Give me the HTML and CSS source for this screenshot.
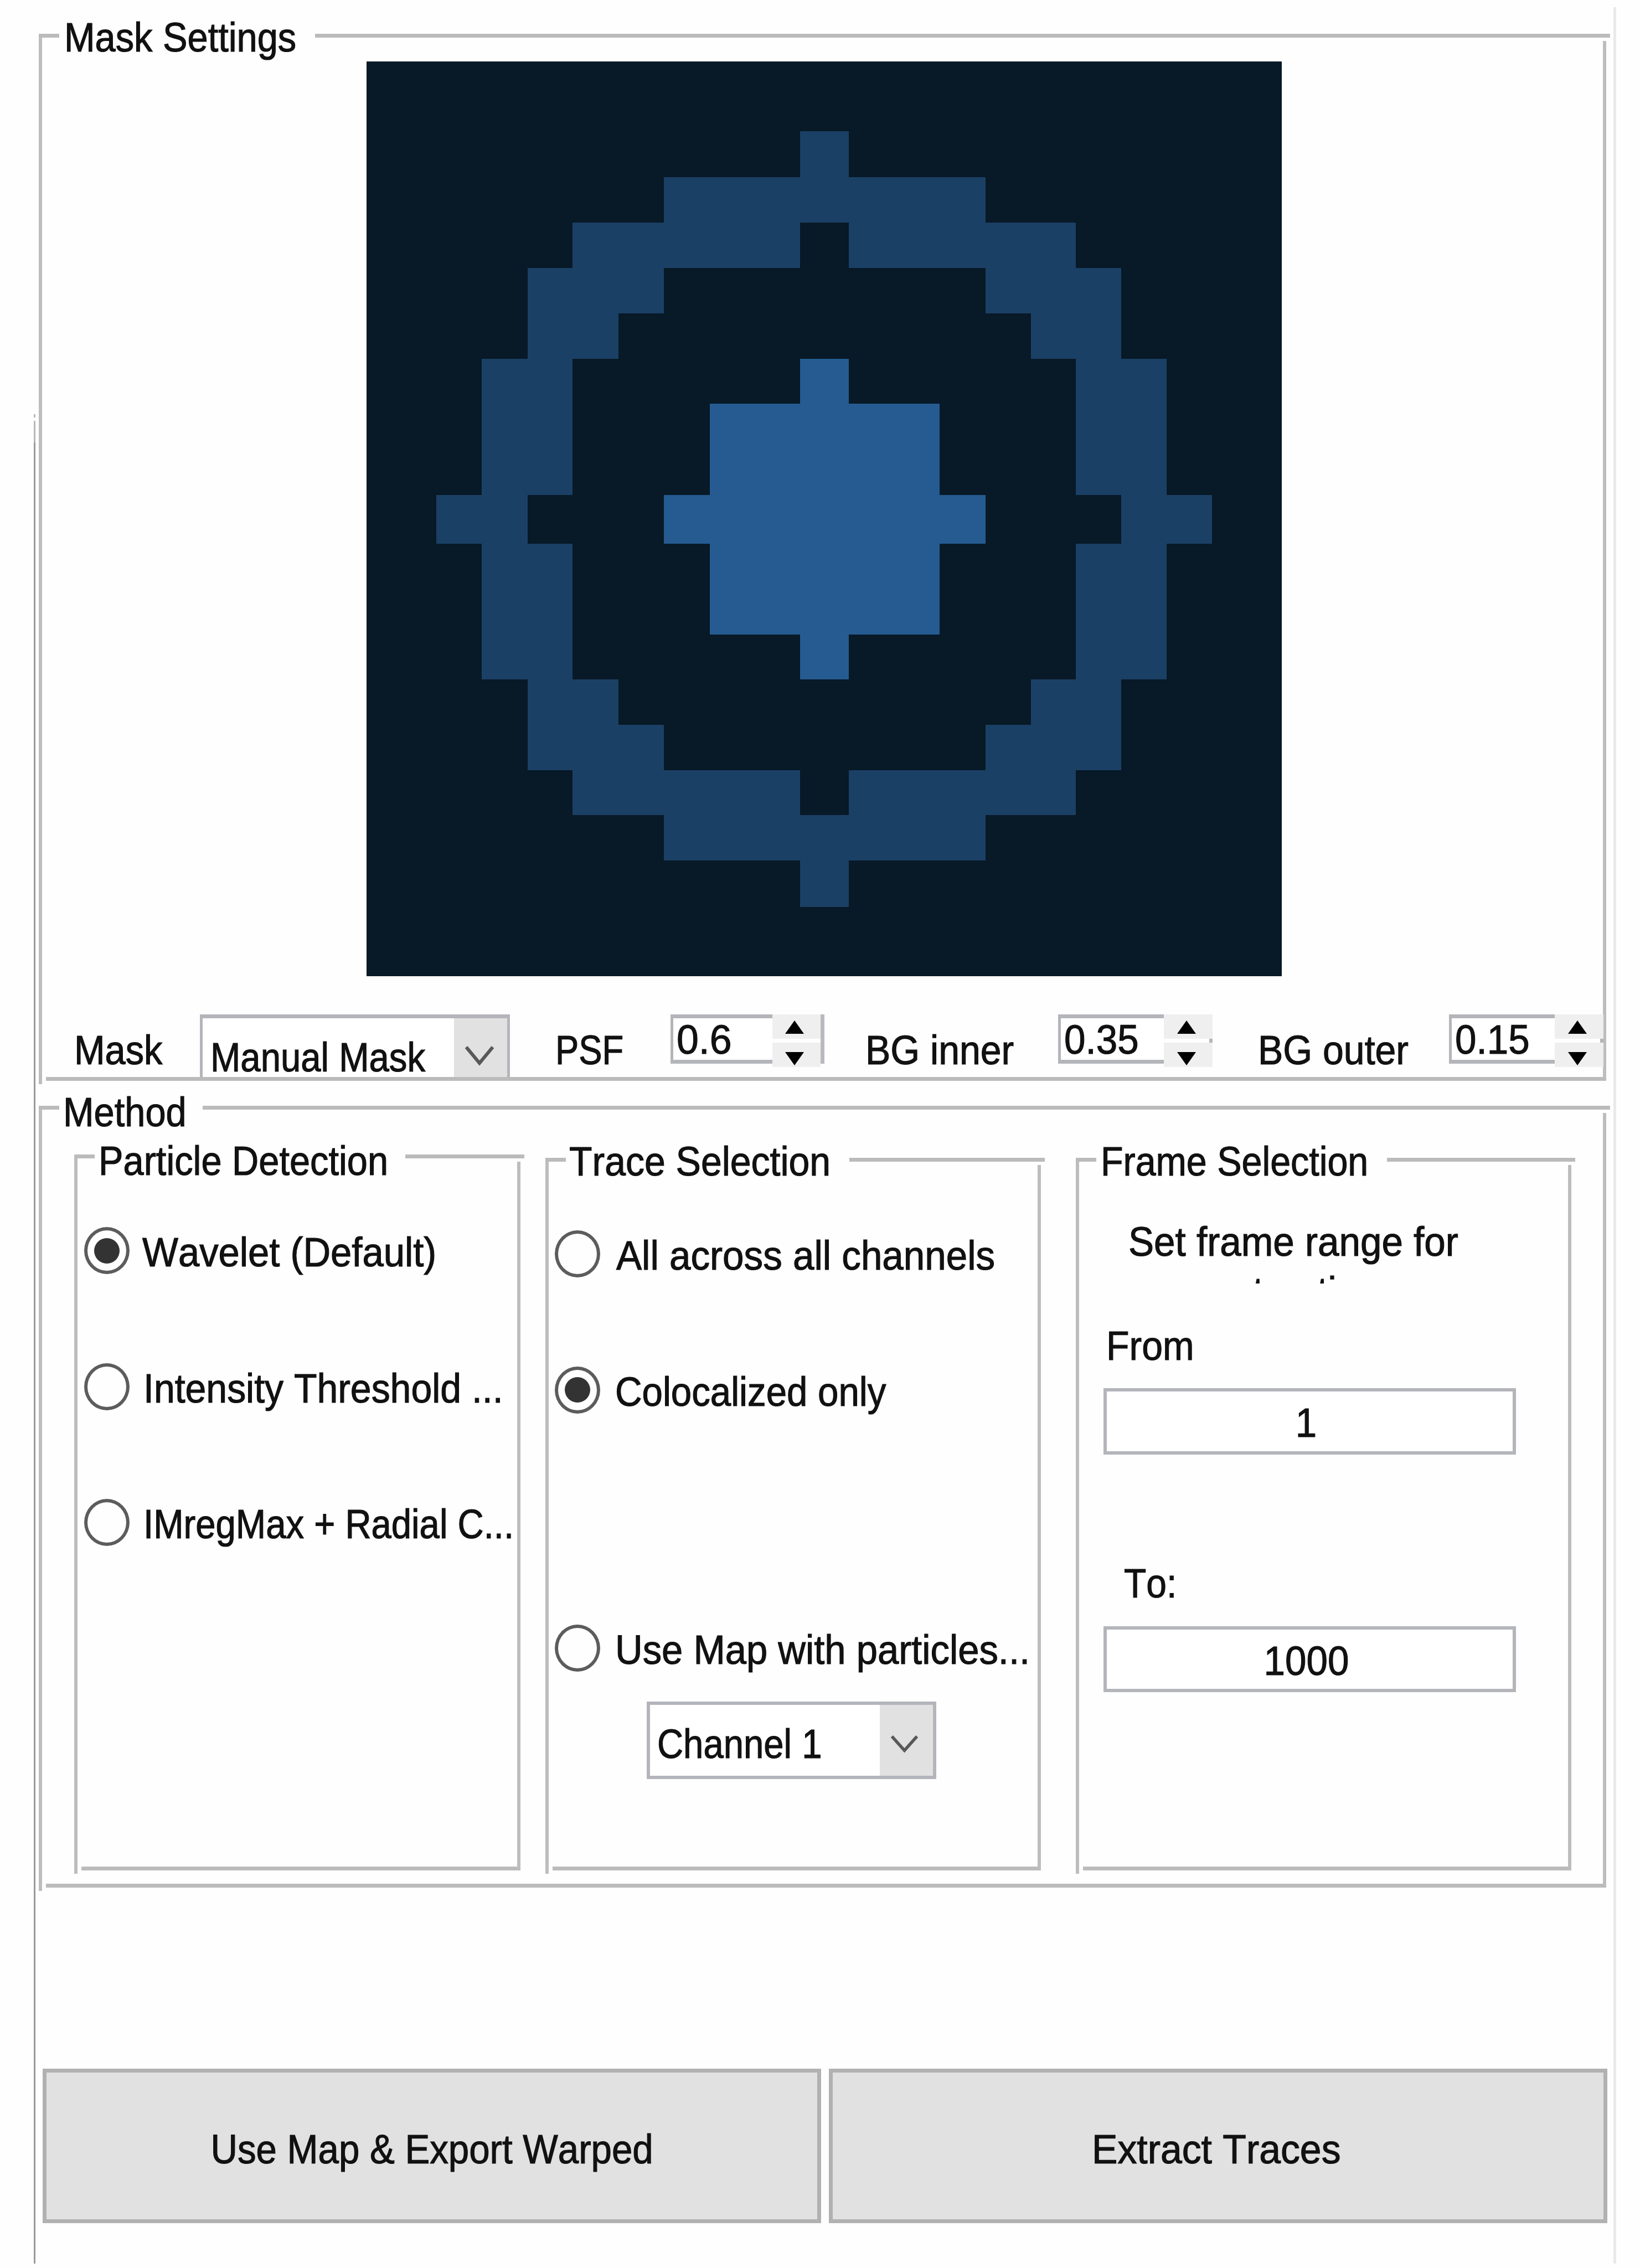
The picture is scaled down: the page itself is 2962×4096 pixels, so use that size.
FILE: index.html
```html
<!DOCTYPE html>
<html lang="en">
<head>
<meta charset="utf-8">
<title>Mask Settings</title>
<link rel="stylesheet" href="styles.css">
</head>
<body>
<main class="window">
  <section class="group mask-group">
    <header class="group-head"><i class="stub"></i><h2 class="title title-mask"><span class="t w89">Mask Settings</span></h2><i class="rule"></i></header>
    <svg class="mask-image" viewBox="24 31 1488 1489" preserveAspectRatio="none" shape-rendering="crispEdges">
      <rect x="24" y="31" width="1488" height="1489" fill="#081927"/>
      <path fill="#1b4065" fill-rule="evenodd" d="M729,145 808,145 808,219 1030,219 1030,293 1177,293 1177,367 1251,367 1251,515 1325,515 1325,737 1399,737 1399,816 1325,816 1325,1037 1251,1037 1251,1185 1177,1185 1177,1258 1030,1258 1030,1332 808,1332 808,1407 729,1407 729,1332 507,1332 507,1258 359,1258 359,1185 286,1185 286,1037 211,1037 211,816 137,816 137,737 211,737 211,515 286,515 286,367 359,367 359,293 507,293 507,219 729,219Z M729,293 808,293 808,367 1030,367 1030,441 1104,441 1104,515 1177,515 1177,737 1251,737 1251,816 1177,816 1177,1037 1104,1037 1104,1111 1030,1111 1030,1185 808,1185 808,1258 729,1258 729,1185 507,1185 507,1111 434,1111 434,1037 359,1037 359,816 286,816 286,737 359,737 359,515 434,515 434,441 507,441 507,367 729,367Z"/>
      <path fill="#255b91" d="M729,515 808,515 808,588 956,588 956,737 1030,737 1030,816 956,816 956,964 808,964 808,1037 729,1037 729,964 582,964 582,816 507,816 507,737 582,737 582,588 729,588Z"/>
    </svg>
    <div class="controls">
      <span class="label"><span class="t w89">Mask</span></span>
      <div class="select select-mask"><span class="select-text"><span class="t w87">Manual Mask</span></span><span class="select-arrow"><svg viewBox="0 0 54 36" class="chevron-tall"><path d="M3 2 L27 31 L51 2" fill="none" stroke="#595959" stroke-width="6"/></svg></span></div>
      <span class="label"><span class="t w84">PSF</span></span>
      <div class="spinner"><span class="value"><span class="t w96">0.6</span></span><span class="steps"><b class="step up"><svg viewBox="0 0 34 24"><path d="M17 0 L34 24 H0Z"/></svg></b><b class="step down"><svg viewBox="0 0 34 24"><path d="M17 24 L34 0 H0Z"/></svg></b></span><i class="edge"></i></div>
      <span class="label"><span class="t w905">BG inner</span></span>
      <div class="spinner wide"><span class="value"><span class="t w92">0.35</span></span><span class="steps"><b class="step up"><svg viewBox="0 0 34 24"><path d="M17 0 L34 24 H0Z"/></svg></b><i class="tick"></i><b class="step down"><svg viewBox="0 0 34 24"><path d="M17 24 L34 0 H0Z"/></svg></b></span></div>
      <span class="label"><span class="t w905">BG outer</span></span>
      <div class="spinner wide"><span class="value"><span class="t w92">0.15</span></span><span class="steps"><b class="step up"><svg viewBox="0 0 34 24"><path d="M17 0 L34 24 H0Z"/></svg></b><i class="tick"></i><b class="step down"><svg viewBox="0 0 34 24"><path d="M17 24 L34 0 H0Z"/></svg></b></span></div>
    </div>
  </section>

  <section class="group method-group">
    <header class="group-head"><i class="stub"></i><h2 class="title title-method"><span class="t w89">Method</span></h2><i class="rule"></i></header>
    <div class="panels">
      <section class="group particle">
        <header class="group-head"><i class="stub"></i><h3 class="title title-particle"><span class="t w89">Particle Detection</span></h3><i class="rule"></i></header>
        <div class="radios">
          <div class="radio on"><i></i><span class="wavelet"><span class="t w915">Wavelet (Default)</span></span></div>
          <div class="radio"><i></i><span><span class="t w905">Intensity Threshold ...</span></span></div>
          <div class="radio"><i></i><span><span class="t w87">IMregMax + Radial C...</span></span></div>
        </div>
      </section>
      <section class="group trace">
        <header class="group-head"><i class="stub"></i><h3 class="title title-trace"><span class="t w905">Trace Selection</span></h3><i class="rule"></i></header>
        <div class="radios">
          <div class="radio"><i></i><span class="all"><span class="t w92">All across all channels</span></span></div>
          <div class="radio on"><i></i><span><span class="t w895">Colocalized only</span></span></div>
          <div class="radio map"><i></i><span><span class="t w915">Use Map with particles...</span></span></div>
        </div>
        <div class="select select-channel"><span class="select-text"><span class="t w87">Channel 1</span></span><span class="select-arrow"><svg viewBox="0 0 54 36" class="chevron"><path d="M3 3 L27 30 L51 3" fill="none" stroke="#595959" stroke-width="6"/></svg></span></div>
      </section>
      <section class="group frame">
        <header class="group-head"><i class="stub"></i><h3 class="title title-frame"><span class="t w885">Frame Selection</span></h3><i class="rule"></i></header>
        <p class="hint"><span class="t w92">Set frame range for</span><span class="t w93 second">extraction</span></p>
        <div class="field-label from"><span class="t w905">From</span></div>
        <div class="input"><span class="t w92">1</span></div>
        <div class="field-label to"><span class="t w88">To:</span></div>
        <div class="input input-to"><span class="t w92">1000</span></div>
      </section>
    </div>
  </section>

  <footer class="actions">
    <button class="action"><span class="t w895">Use Map &amp; Export Warped</span></button>
    <button class="action extract"><span class="t w93">Extract Traces</span></button>
  </footer>
</main>
</body>
</html>
```
FILE: styles.css
```css
* { box-sizing: border-box; }
body {
  margin: 0;
  background: #fefefe;
  color: #111;
  font: 75px/80px "Liberation Sans", Arial, sans-serif;
  font-kerning: none;
  -webkit-text-stroke: 1.2px #111;
}
.window {
  width: 2858px;
  height: 4096px;
  margin-left: 61px;
  padding: 61px 11px 0 9px;
  overflow: hidden;
  background:
    linear-gradient(#b8b8b8, #b8b8b8) 0 748px / 3px 6px no-repeat,
    linear-gradient(#b8b8b8, #b8b8b8) 0 760px / 3px 39px no-repeat,
    linear-gradient(#97999c, #97999c) 0 799px / 3px 3289px no-repeat,
    linear-gradient(#e9e9e9, #e9e9e9) 100% 13px / 5px 4075px no-repeat;
}

/* Condensed UI lettering */
.t { display: inline-block; white-space: nowrap; transform-origin: 0 50%; }
.w84 { transform: scaleX(.845); }
.w87 { transform: scaleX(.87); }
.w88 { transform: scaleX(.88); }
.w885 { transform: scaleX(.885); }
.w89 { transform: scaleX(.89); }
.w895 { transform: scaleX(.896); }
.w905 { transform: scaleX(.906); }
.w915 { transform: scaleX(.917); }
.w92 { transform: scaleX(.922); }
.w93 { transform: scaleX(.93); }
.w96 { transform: scaleX(.955); }

/* Titled group with open-cornered frame lines */
.group {
  background:
    linear-gradient(#bdbdbd, #bdbdbd) 0 0 / 6px 100% no-repeat,
    linear-gradient(#bdbdbd, #bdbdbd) calc(100% - 7px) 13px / 6px calc(100% - 22px) no-repeat,
    linear-gradient(#bbb, #bbb) 13px calc(100% - 6px) / calc(100% - 20px) 7px no-repeat;
}
.group-head { display: flex; align-items: center; height: 7px; }
.stub { width: 37px; height: 7px; background: #bbb; }
.rule { flex: 1; height: 7px; background: #bbb; }
.title { margin: 0; flex: none; font: inherit; padding: 16px 0 0 7px; }
.title-mask { width: 462px; padding: 4px 0 0 9px; }
.title-method { width: 259px; padding-left: 7px; }
.title-particle { width: 561px; }
.title-trace { width: 512px; padding: 5px 0 0 6px; }
.title-frame { width: 525px; padding: 5px 0 0 8px; }

.mask-group { height: 1897px; }
.mask-image { display: block; width: 1653px; height: 1652px; margin: 43px 0 0 592px; }
.controls {
  display: grid;
  grid-template-columns: 231.5px 637.5px 212px 348.5px 351.5px 357px 349px 279px;
  align-items: start;
  margin-top: 69px;
  padding-left: 59.5px;
}
.label { padding: 24px 0 0 4px; }

.select { display: flex; border: 6px solid #b4b5bb; background: #fff; }
.select-text { flex: 1; min-width: 0; padding-left: 14px; }
.select-arrow { flex: none; display: flex; background: #e1e1e1; }
.select-mask { width: 560px; height: 113px; border-width: 7px 5px 0; }
.select-mask .select-text { padding-top: 30px; }
.select-mask .select-arrow { width: 96px; }
.chevron-tall { width: 54px; height: 36px; margin: 50px 0 0 19px; }

.spinner { display: flex; width: 279px; height: 95px; }
.value { flex: none; width: 184px; height: 89px; padding-left: 6px; line-height: 76px; border: solid #b4b5bb; border-width: 7px 0 7px 5px; background: #fff; }
.steps { display: flex; flex-direction: column; justify-content: space-between; width: 87px; height: 95px; }
.wide .value { width: 191px; }
.wide .steps { width: 88px; }
.step { display: flex; justify-content: center; height: 44px; padding-right: 6px; background: #efefef; }
.step svg { width: 34px; height: 24px; fill: #000; }
.up { padding-top: 11px; }
.down { padding-top: 17px; }
.tick { align-self: flex-end; width: 6px; height: 7px; background: #b4b5bb; }
.edge { width: 7px; height: 89px; background: #b9bac0; }

.method-group { height: 1418.5px; margin-top: 38.5px; }
.panels { display: flex; align-items: flex-end; height: 1380.5px; padding-left: 64px; }
.particle { width: 813px; height: 1299.5px; }
.trace { width: 902px; height: 1293.5px; margin-left: 37.7px; }
.frame { width: 902px; height: 1293.5px; margin-left: 56.3px; }

.radios { display: flex; flex-direction: column; gap: 159.5px; padding: 124px 0 0 17.5px; }
.radio { display: flex; align-items: center; gap: 20px; height: 86px; }
.radio i { flex: none; display: grid; place-items: center; width: 82px; height: 85px; border: 6px solid #5c5c5c; border-radius: 50%; }
.radio.on i::after { content: ""; width: 46px; height: 46px; border-radius: 50%; background: #333; }
.radio > span { padding: 5px 0 0 5px; }
.radio > .wavelet { padding-left: 3px; }
.radio > .all { padding-left: 8px; }
.trace .radio > span { padding-left: 7px; }
.trace .radio > .all { padding-left: 9px; }
.radio.map { margin-top: 221px; }

.select-channel { width: 523px; height: 140px; margin: 53.5px 0 0 183px; }
.select-channel .select-text { padding: 30px 0 0 13px; }
.select-channel .select-arrow { width: 96px; }
.chevron { width: 51px; height: 34px; margin: 54px 0 0 19px; }

.hint { display: flex; flex-direction: column; height: 119px; margin: 101px 0 0 95px; line-height: 87px; overflow: hidden; }
.second { margin: 3px 0 0 151px; }
.field-label { height: 80px; }
.from { margin: 72.5px 0 0 55.5px; }
.to { margin: 192px 0 0 87px; }
.input { display: flex; justify-content: center; width: 745px; height: 119.5px; margin: 37px 0 0 50.5px; padding: 16px 14px 0 0; border: 6px solid #b4b5bb; background: #fff; }
.input-to { margin-top: 38px; }
.input .t, .action .t { transform-origin: 50% 50%; }

.actions { display: flex; gap: 13.5px; margin: 320.5px 0 0 7px; }
.action { width: 1406px; height: 279px; padding: 12px 0 0; border: 7px solid #b1b1b1; background: #e1e1e1; color: inherit; font: inherit; -webkit-text-stroke: inherit; }
.extract { padding-right: 6px; }
```
